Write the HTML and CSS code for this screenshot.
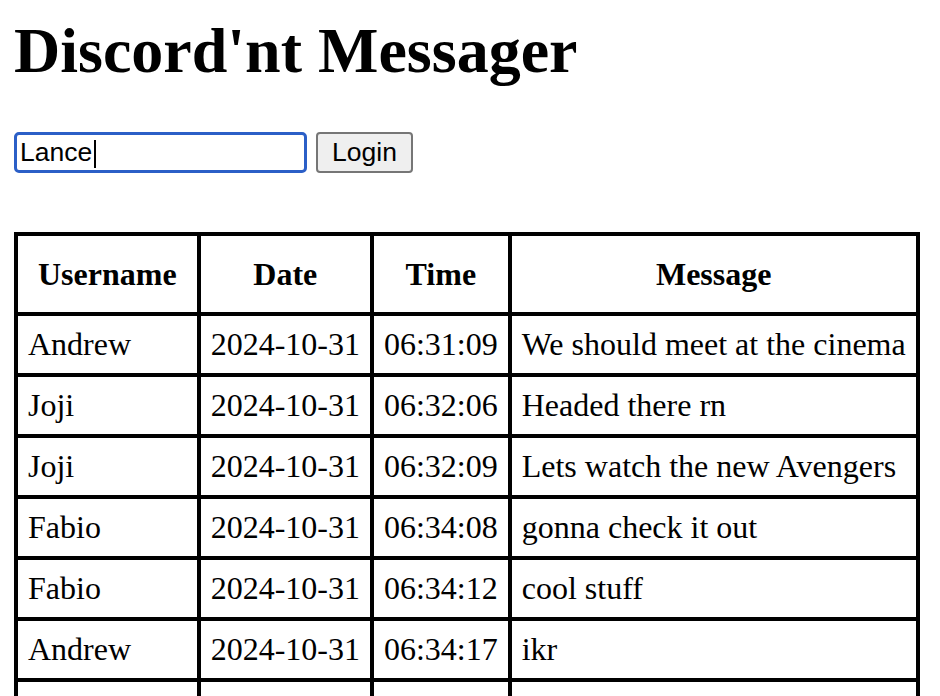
FILE: index.html
```html
<!DOCTYPE html>
<html>
<head>
<meta charset="utf-8">
<title>Discord'nt Messager</title>
<link rel="stylesheet" href="styles.css">
</head>
<body>
<h1 class="title">Discord'nt Messager</h1>
<form class="login">
  <span class="field"><input class="name" type="text" value="Lance"><span class="caret"></span></span>
  <button class="btn" type="button">Login</button>
</form>
<table class="messages">
  <thead>
    <tr><th>Username</th><th>Date</th><th>Time</th><th>Message</th></tr>
  </thead>
  <tbody>
    <tr><td>Andrew</td><td>2024-10-31</td><td>06:31:09</td><td>We should meet at the cinema</td></tr>
    <tr><td>Joji</td><td>2024-10-31</td><td>06:32:06</td><td>Headed there rn</td></tr>
    <tr><td>Joji</td><td>2024-10-31</td><td>06:32:09</td><td>Lets watch the new Avengers</td></tr>
    <tr><td>Fabio</td><td>2024-10-31</td><td>06:34:08</td><td>gonna check it out</td></tr>
    <tr><td>Fabio</td><td>2024-10-31</td><td>06:34:12</td><td>cool stuff</td></tr>
    <tr><td>Andrew</td><td>2024-10-31</td><td>06:34:17</td><td>ikr</td></tr>
    <tr><td>&nbsp;</td><td>&nbsp;</td><td>&nbsp;</td><td>&nbsp;</td></tr>
  </tbody>
</table>
</body>
</html>
```

FILE: styles.css
```css
html, body {
  margin: 0;
  padding: 0;
  background: #fff;
}
body {
  padding: 15px 14px 0 14px;
  font-family: "Liberation Serif", "Times New Roman", serif;
  color: #000;
}
.title {
  margin: 0;
  font-size: 64px;
  font-weight: bold;
  line-height: 71px;
}
.login {
  margin: 46px 0 0 0;
  display: flex;
  align-items: center;
  gap: 9px;
  height: 41px;
}
.field {
  position: relative;
  display: inline-block;
}
.name {
  box-sizing: border-box;
  width: 293px;
  height: 41px;
  margin: 0;
  padding: 0 0 0 3px;
  border: 3px solid #2b5fc7;
  border-radius: 5px;
  outline: none;
  font-family: "Liberation Sans", Arial, sans-serif;
  font-size: 26.5px;
  color: #000;
  background: #fff;
}
.caret {
  position: absolute;
  left: 80px;
  top: 8px;
  width: 2px;
  height: 28px;
  background: #000;
}
.btn {
  box-sizing: border-box;
  width: 97px;
  height: 41px;
  margin: 0;
  padding: 0;
  border: 2px solid #767676;
  border-radius: 4px;
  background: #efefef;
  font-family: "Liberation Sans", Arial, sans-serif;
  font-size: 26.5px;
  color: #000;
}
.messages {
  margin-top: 59px;
  border-collapse: collapse;
  border: 4px solid #000;
  font-size: 32px;
}
.messages th,
.messages td {
  border: 4px solid #000;
  line-height: 37px;
}
.messages th {
  padding: 19.5px 20px;
  font-weight: bold;
  text-align: center;
}
.messages td {
  padding: 10px 10px;
  text-align: left;
}
```
